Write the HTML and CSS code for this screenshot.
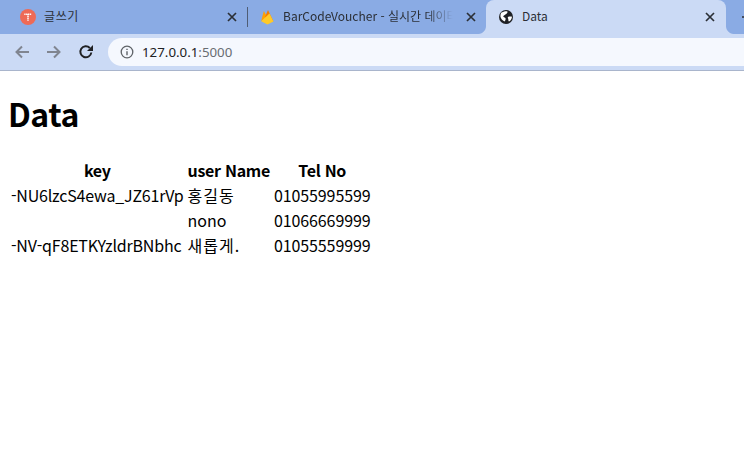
FILE: index.html
```html
<!DOCTYPE html>
<html lang="ko">
  <head>
    <meta charset="utf-8">
    <title>Data</title>
    <link rel="stylesheet" href="styles.css">
  </head>
  <body>
    <div class="chrome">
      <div class="tabStrip">
        <div class="tab tabFirst">
          <svg class="favicon" viewBox="0 0 16 16">
            <circle cx="8" cy="8" r="8" fill="#ee6a56"/>
            <path d="M4.300 5.300h7.400M8 5.300v6.500" fill="none" stroke="#fff" stroke-width="1.500" stroke-dasharray="1.300 .5"/>
          </svg>
          <span class="tabTitle hangulTab">글쓰기</span>
          <svg class="tabClose" viewBox="0 0 10 10"><path d="M1 1l8 8M9 1l-8 8"/></svg>
        </div>
        <div class="tabDivider"></div>
        <div class="tab tabSecond">
          <svg class="favicon" viewBox="0 0 16 16">
            <path d="M1.200 12.300L3.800 2 7 7.500z" fill="#ffa000"/>
            <path d="M5 8L8 1l5.500 11.500z" fill="#f57c00"/>
            <path d="M1.200 12.300L9.500 4.500l4 8-6 3z" fill="#ffca28"/>
          </svg>
          <span class="tabTitle tabFade">BarCodeVoucher - 실시간 데이터</span>
          <svg class="tabClose" viewBox="0 0 10 10"><path d="M1 1l8 8M9 1l-8 8"/></svg>
        </div>
        <div class="tab tabActive">
          <svg class="favicon" viewBox="0 0 16 16">
            <circle cx="8" cy="8" r="7" fill="#1f2125"/>
            <path d="M3.200 3.800C5 2.600 7.800 2 9.400 2.400 10 3.600 8.400 4.800 7.400 5.400 6.600 6.400 5.200 6.600 5.200 7.600c.6 1 2 .8 2.400 1.800.2 1.200-.2 2.200-1 3.200C4.400 11.600 2.800 9.600 2.400 7.600 2.400 6.200 2.600 4.800 3.200 3.800zM10 8c1.400-.6 3-.4 4-.2-.2 2.200-1.200 3.800-3 4.800-1-.8-.4-1.800-.8-2.800-.4-.6-.6-1.200-.2-1.800z" fill="#fff"/>
          </svg>
          <span class="tabTitle">Data</span>
          <svg class="tabClose" viewBox="0 0 10 10"><path d="M1 1l8 8M9 1l-8 8"/></svg>
        </div>
        <div class="tabNew">
          <svg class="newIcon" viewBox="0 0 10 10"><path d="M5 0v10M0 5h10"/></svg>
        </div>
      </div>
      <div class="toolbar">
        <svg class="navIcon" viewBox="0 0 16 16"><path class="navDim" d="M15 8H2.500M8 2.500L2.500 8 8 13.500"/></svg>
        <svg class="navIcon" viewBox="0 0 16 16"><path class="navDim" d="M1 8h12.500M8 2.500L13.500 8 8 13.500"/></svg>
        <svg class="navIcon" viewBox="0 0 16 16">
          <path class="navDark" d="M13.300 8.500A5.500 5.500 0 1 1 11.800 4"/>
          <path d="M9 7h6V1z" fill="#202124"/>
        </svg>
        <div class="addressBar">
          <svg class="infoIcon" viewBox="0 0 14 14">
            <circle cx="7" cy="7" r="5.800" fill="none" stroke="#5f6368" stroke-width="1.300"/>
            <path d="M6.300 6.200h1.400v4H6.300zM6.300 3.700h1.400v1.400H6.300z" fill="#5f6368"/>
          </svg>
          <span class="urlHost">127.0.0.1</span><span class="urlPort">:5000</span>
        </div>
      </div>
    </div>
    <div class="page">
      <h1>Data</h1>
      <table>
        <tr>
          <th>key</th>
          <th>user Name</th>
          <th>Tel No</th>
        </tr>
        <tr>
          <td class="keyCell">-NU6lzcS4ewa_JZ61rVp</td>
          <td class="hangul">홍길동</td>
          <td class="telCell">01055995599</td>
        </tr>
        <tr>
          <td class="keyCell"></td>
          <td>nono</td>
          <td class="telCell">01066669999</td>
        </tr>
        <tr>
          <td class="keyCell">-NV-qF8ETKYzldrBNbhc</td>
          <td class="hangul">새롭게.</td>
          <td class="telCell">01055559999</td>
        </tr>
      </table>
    </div>
  </body>
</html>
```
FILE: styles.css
```css
* {
  box-sizing: border-box;
}
:root {
  --stripBG: #8aabe4;
  --toolbarBG: #cbdaf5;
  --addressBG: #f5f8fe;
}
html, body {
  margin: 0;
  padding: 0;
  overflow: hidden;
}
body {
  background-color: white;
  font-family: "Noto Sans CJK KR", "Open Sans", sans-serif;
  color: black;
}
.chrome {
  border-bottom: 1px solid #a9b5cc;
}
.tabStrip {
  display: flex;
  height: 34px;
  background-color: var(--stripBG);
}
.tab {
  position: relative;
  display: flex;
  align-items: center;
  flex: none;
  height: 34px;
  font-size: 12px;
  color: #2b2f36;
}
.tabFirst {
  width: 247px;
  padding: 0 10px 0 20px;
}
.tabDivider {
  flex: none;
  width: 1px;
  height: 20px;
  margin-top: 7px;
  background-color: #4f5d75;
}
.tabSecond {
  width: 238px;
  padding: 0 10px 0 12px;
}
.tabActive {
  width: 240px;
  height: 38px;
  padding: 0 11px 4px 12px;
  background-color: var(--toolbarBG);
  border-radius: 8px 8px 0 0;
}
.tabActive::before,
.tabActive::after {
  content: "";
  position: absolute;
  top: 26px;
  width: 8px;
  height: 8px;
}
.tabActive::before {
  left: -8px;
  background: radial-gradient(circle at 0 0, var(--stripBG) 7.5px, var(--toolbarBG) 8.5px);
}
.tabActive::after {
  right: -8px;
  background: radial-gradient(circle at 100% 0, var(--stripBG) 7.5px, var(--toolbarBG) 8.5px);
}
.favicon {
  flex: none;
  width: 16px;
  height: 16px;
  margin-right: 8px;
}
.tabSecond .favicon {
  margin-right: 7px;
}
.tabTitle {
  flex: 1;
  min-width: 0;
  line-height: 16px;
  margin-top: -2px;
  white-space: nowrap;
}
.hangulTab {
  letter-spacing: 0.6px;
}
.tabFade {
  flex: none;
  -webkit-mask-image: linear-gradient(to right, black 82%, transparent 97%);
  mask-image: linear-gradient(to right, black 82%, transparent 97%);
}
.tabClose {
  flex: none;
  width: 10px;
  height: 10px;
  margin-left: auto;
  fill: none;
  stroke: #2b2f36;
  stroke-width: 1.700;
}
.tabNew {
  flex: 1;
  display: flex;
  align-items: center;
  justify-content: flex-end;
  height: 34px;
  overflow: hidden;
}
.newIcon {
  flex: none;
  width: 10px;
  height: 10px;
  margin-right: -8px;
  fill: none;
  stroke: #2b2f36;
  stroke-width: 1.700;
}
.toolbar {
  display: flex;
  align-items: center;
  height: 36px;
  padding: 4px 0 4px 14px;
  background-color: var(--toolbarBG);
}
.navIcon {
  flex: none;
  width: 16px;
  height: 16px;
  margin-right: 16px;
  fill: none;
  stroke-width: 2;
}
.navDim {
  stroke: #808590;
}
.navDark {
  stroke: #202124;
}
.addressBar {
  display: flex;
  align-items: center;
  flex: 1;
  height: 28px;
  margin-left: -2px;
  padding-left: 12px;
  border-radius: 14px 0 0 14px;
  background-color: var(--addressBG);
  font-size: 13.300px;
  font-family: "Noto Sans", sans-serif;
}
.infoIcon {
  flex: none;
  width: 14px;
  height: 14px;
  margin-right: 8px;
}
.urlHost {
  color: #202124;
}
.urlPort {
  color: #686c72;
}
.page {
  padding: 0 8px;
}
h1 {
  margin: 19px 0 0 0;
  font-size: 32px;
  line-height: 46px;
  font-weight: 700;
  letter-spacing: -0.5px;
}
table {
  margin-top: 21px;
  border-collapse: separate;
  border-spacing: 2px;
  font-size: 16px;
}
th, td {
  padding: 1px;
  line-height: 21px;
  font-weight: 400;
  white-space: nowrap;
}
th {
  font-weight: 700;
  text-align: center;
  letter-spacing: -0.3px;
}
.keyCell {
  letter-spacing: -0.2px;
}
.telCell {
  letter-spacing: -0.1px;
}
.hangul {
  letter-spacing: 1px;
}
```
